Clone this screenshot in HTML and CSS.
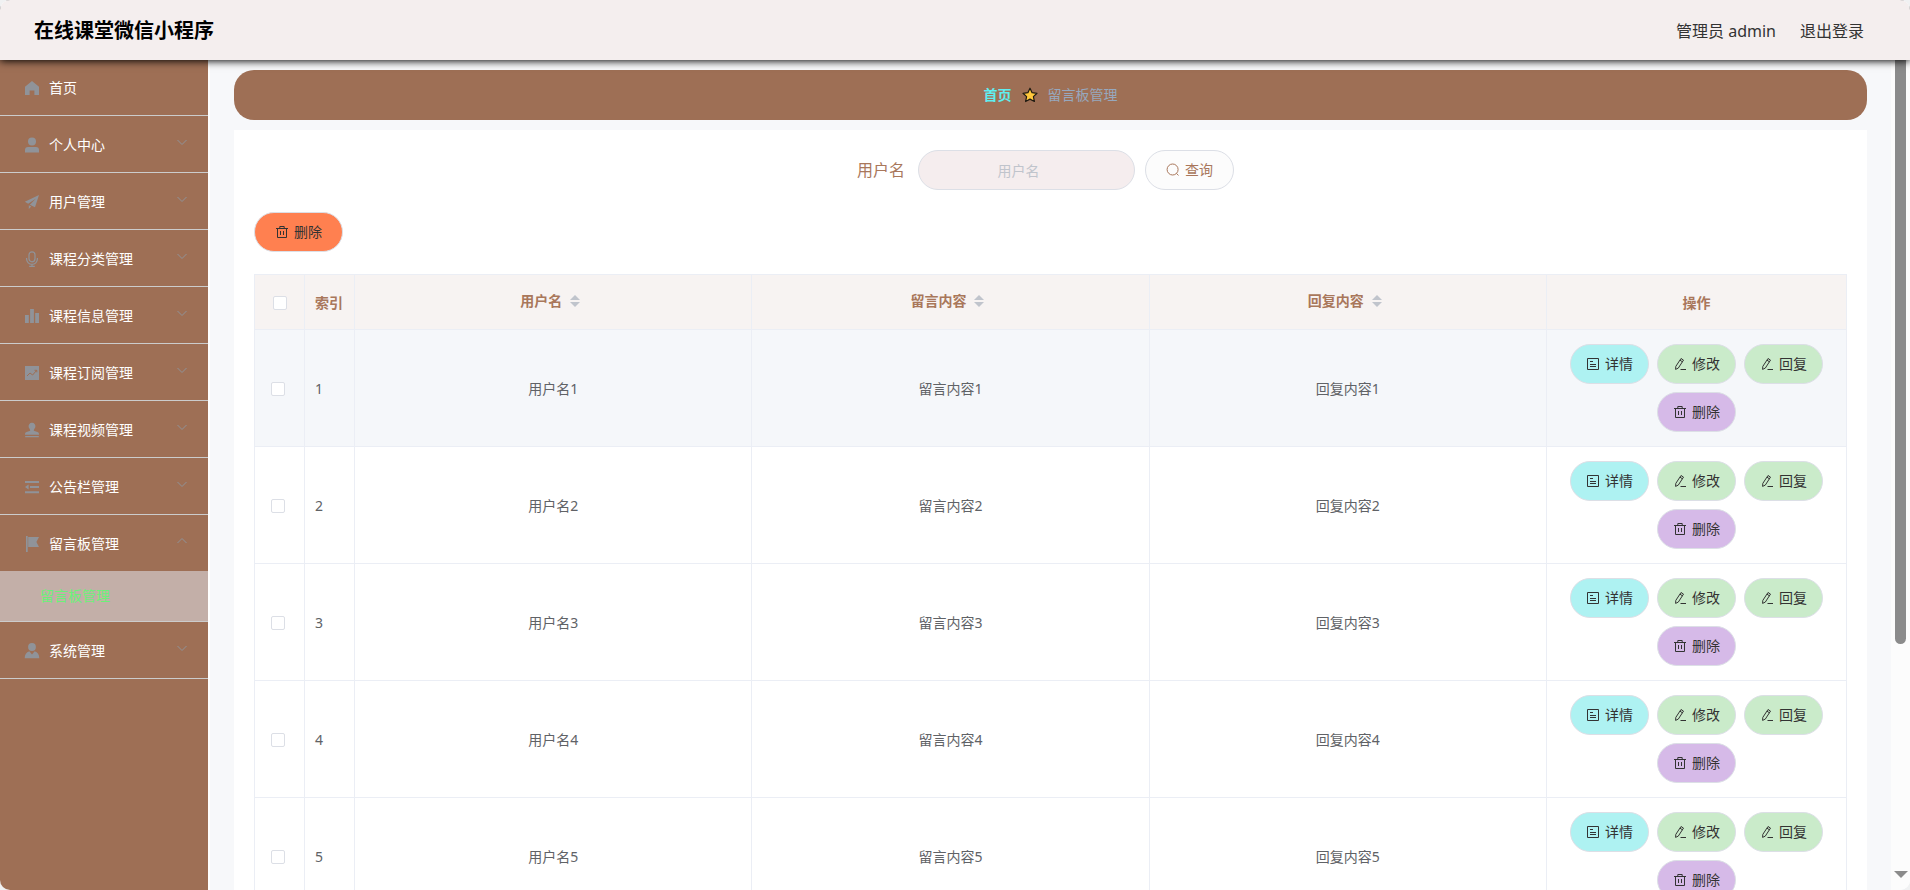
FILE: index.html
```html
<!DOCTYPE html>
<html lang="zh-CN">
<head>
<meta charset="utf-8">
<title>在线课堂微信小程序</title>
<link rel="stylesheet" href="styles.css">
</head>
<body>
<svg class="sprite" aria-hidden="true">
  <symbol id="home" viewBox="0 0 16 16"><path d="M8 1 1 6.800V15h4.600v-4.500h4.800V15H15V6.800z" fill="currentColor"/></symbol>
  <symbol id="user" viewBox="0 0 16 16"><circle cx="8" cy="4.500" r="4" fill="currentColor"/><path d="M1 15.500V13a3 3 0 0 1 3-3h8a3 3 0 0 1 3 3v2.500z" fill="currentColor"/></symbol>
  <symbol id="plane" viewBox="0 0 16 16"><path d="M15 1 .8 7.800l3.400 2L12 4.600l-6.200 6.200 5.200 2.400zM4.800 11.300V15l2.400-2.600z" fill="currentColor"/></symbol>
  <symbol id="mic" viewBox="0 0 16 16"><g fill="none" stroke="currentColor" stroke-width="1.200"><rect x="5" y=".8" width="6" height="10" rx="3"/><path d="M2.600 7v1a5.400 5.400 0 0 0 10.800 0V7M8 13.200v2M5.200 15.300h5.600"/></g></symbol>
  <symbol id="bars" viewBox="0 0 16 16"><path d="M1 7h3.800v8H1zM6.100 1h3.800v14H6.100zM11.200 5H15v10h-3.800z" fill="currentColor"/></symbol>
  <symbol id="trend" viewBox="0 0 16 16"><path d="M1 1h14v14H1z" fill="currentColor"/><path d="m3 11 3-3 2.600 2 4-4.600M10.500 5.300h2.300v2" fill="none" stroke="#9e6f55" stroke-width="1"/></symbol>
  <symbol id="stamp" viewBox="0 0 16 16"><path d="M8 .8a3.400 3.400 0 0 0-3.300 4.400C5 6.300 6.200 7 6.200 8.800L2.500 10A2 2 0 0 0 1 12v.8h14V12a2 2 0 0 0-1.500-2L9.800 8.800c0-1.800 1.200-2.500 1.500-3.600A3.400 3.400 0 0 0 8 .8zM1.200 14h13.600v1.300H1.200z" fill="currentColor"/></symbol>
  <symbol id="fold" viewBox="0 0 16 16"><path d="M1 2h14v2H1zM6 7h9v2H6zM1 12.200h14v2H1zM1 8l3.600-2.500v5z" fill="currentColor"/></symbol>
  <symbol id="flag" viewBox="0 0 16 16"><path d="M2 0h1.700v16H2zM4.200 1H15l-2.600 5 2.600 5H4.200z" fill="currentColor"/></symbol>
  <symbol id="person" viewBox="0 0 16 16"><circle cx="8" cy="4" r="3.900" fill="currentColor"/><path d="M5.300 8.200 8 11.500l2.700-3.300c3 .8 4.600 3.300 4.600 7.100H.7c0-3.800 1.600-6.300 4.600-7.100z" fill="currentColor"/></symbol>
  <symbol id="chevron" viewBox="0 0 14 14"><path d="m2.500 5 4.500 4.500L11.500 5" fill="none" stroke="currentColor" stroke-width="1"/></symbol>
  <symbol id="search" viewBox="0 0 14 14"><path d="M6.600 1a5.500 5.500 0 1 0 0 11 5.500 5.500 0 0 0 0-11zM10.400 10.400l2.100 2" fill="none" stroke="currentColor" stroke-width="1"/></symbol>
  <symbol id="trash" viewBox="0 0 14 14"><path d="M1 3.500h12M2.500 3.500v9h9v-9M4.800 3.200V1.500h4.400v1.700M5.500 6v4M8.500 6v4" fill="none" stroke="currentColor" stroke-width="1"/></symbol>
  <symbol id="doc" viewBox="0 0 14 14"><path d="M1.500 1.500h11v11h-11zM4 4.500h3M4 7.500h6M4 9.500h6" fill="none" stroke="currentColor" stroke-width="1"/></symbol>
  <symbol id="edit" viewBox="0 0 14 14"><path d="m8 1.500 2.500 1.600-5.200 8-2.700 1.300.2-3zM7 3.200l2.400 1.600M7.500 12.500h5.500" fill="none" stroke="currentColor" stroke-width="1"/></symbol>
  <symbol id="star" viewBox="0 0 16 16"><path d="m8 1.200 2.100 4.500 4.900.6-3.600 3.300 1 4.900L8 12.100l-4.400 2.400 1-4.900L1 6.300l4.900-.6z" fill="#ffc83d" stroke="#1f1a12" stroke-width="1.200" stroke-linejoin="round"/></symbol>
  <symbol id="down" viewBox="0 0 14 8"><path d="M0 0h14L7 7z" fill="currentColor"/></symbol>
</svg>

<div class="app">
  <header class="topbar">
    <h1 class="brand">在线课堂微信小程序</h1>
    <span class="account">管理员 admin</span>
    <a class="logout" href="#">退出登录</a>
  </header>

  <div class="body">
    <nav class="sidebar">
      <a class="item first" href="#"><svg class="glyph"><use href="#home"/></svg><span>首页</span></a>
      <a class="item" href="#"><svg class="glyph"><use href="#user"/></svg><span>个人中心</span><svg class="chevron"><use href="#chevron"/></svg></a>
      <a class="item" href="#"><svg class="glyph"><use href="#plane"/></svg><span>用户管理</span><svg class="chevron"><use href="#chevron"/></svg></a>
      <a class="item" href="#"><svg class="glyph"><use href="#mic"/></svg><span>课程分类管理</span><svg class="chevron"><use href="#chevron"/></svg></a>
      <a class="item" href="#"><svg class="glyph"><use href="#bars"/></svg><span>课程信息管理</span><svg class="chevron"><use href="#chevron"/></svg></a>
      <a class="item" href="#"><svg class="glyph"><use href="#trend"/></svg><span>课程订阅管理</span><svg class="chevron"><use href="#chevron"/></svg></a>
      <a class="item" href="#"><svg class="glyph"><use href="#stamp"/></svg><span>课程视频管理</span><svg class="chevron"><use href="#chevron"/></svg></a>
      <a class="item" href="#"><svg class="glyph"><use href="#fold"/></svg><span>公告栏管理</span><svg class="chevron"><use href="#chevron"/></svg></a>
      <a class="item open" href="#"><svg class="glyph"><use href="#flag"/></svg><span>留言板管理</span><svg class="chevron"><use href="#chevron"/></svg></a>
      <a class="subitem" href="#">留言板管理</a>
      <a class="item" href="#"><svg class="glyph"><use href="#person"/></svg><span>系统管理</span><svg class="chevron"><use href="#chevron"/></svg></a>
    </nav>

    <main class="main">
      <div class="crumbs">
        <a class="crumb-home" href="#">首页</a>
        <svg class="star"><use href="#star"/></svg>
        <span class="crumb-here">留言板管理</span>
      </div>

      <section class="card">
        <form class="search">
          <label class="search-label" for="username">用户名</label>
          <input class="search-input" id="username" type="text" placeholder="用户名">
          <button class="btn wide query" type="button"><svg class="icon"><use href="#search"/></svg>查询</button>
        </form>
        <div class="tools">
          <button class="btn wide bulk" type="button"><svg class="icon"><use href="#trash"/></svg>删除</button>
        </div>

        <table class="grid">
          <colgroup><col class="narrow"><col class="narrow"><col><col><col><col class="ops"></colgroup>
          <thead>
            <tr>
              <th><input class="check" type="checkbox" aria-label="全选"></th>
              <th class="index">索引</th>
              <th><span class="sortable">用户名<span class="carets"></span></span></th>
              <th><span class="sortable">留言内容<span class="carets"></span></span></th>
              <th><span class="sortable">回复内容<span class="carets"></span></span></th>
              <th>操作</th>
            </tr>
          </thead>
          <tbody>
            <tr class="hover">
              <td class="pick"><input class="check" type="checkbox" aria-label="选择1"></td><td class="index">1</td><td>用户名1</td><td>留言内容1</td><td>回复内容1</td>
              <td><div class="actions"><button class="btn view" type="button"><svg class="icon"><use href="#doc"/></svg>详情</button><button class="btn edit" type="button"><svg class="icon"><use href="#edit"/></svg>修改</button><button class="btn edit" type="button"><svg class="icon"><use href="#edit"/></svg>回复</button><button class="btn remove" type="button"><svg class="icon"><use href="#trash"/></svg>删除</button></div></td>
            </tr>
            <tr>
              <td class="pick"><input class="check" type="checkbox" aria-label="选择2"></td><td class="index">2</td><td>用户名2</td><td>留言内容2</td><td>回复内容2</td>
              <td><div class="actions"><button class="btn view" type="button"><svg class="icon"><use href="#doc"/></svg>详情</button><button class="btn edit" type="button"><svg class="icon"><use href="#edit"/></svg>修改</button><button class="btn edit" type="button"><svg class="icon"><use href="#edit"/></svg>回复</button><button class="btn remove" type="button"><svg class="icon"><use href="#trash"/></svg>删除</button></div></td>
            </tr>
            <tr>
              <td class="pick"><input class="check" type="checkbox" aria-label="选择3"></td><td class="index">3</td><td>用户名3</td><td>留言内容3</td><td>回复内容3</td>
              <td><div class="actions"><button class="btn view" type="button"><svg class="icon"><use href="#doc"/></svg>详情</button><button class="btn edit" type="button"><svg class="icon"><use href="#edit"/></svg>修改</button><button class="btn edit" type="button"><svg class="icon"><use href="#edit"/></svg>回复</button><button class="btn remove" type="button"><svg class="icon"><use href="#trash"/></svg>删除</button></div></td>
            </tr>
            <tr>
              <td class="pick"><input class="check" type="checkbox" aria-label="选择4"></td><td class="index">4</td><td>用户名4</td><td>留言内容4</td><td>回复内容4</td>
              <td><div class="actions"><button class="btn view" type="button"><svg class="icon"><use href="#doc"/></svg>详情</button><button class="btn edit" type="button"><svg class="icon"><use href="#edit"/></svg>修改</button><button class="btn edit" type="button"><svg class="icon"><use href="#edit"/></svg>回复</button><button class="btn remove" type="button"><svg class="icon"><use href="#trash"/></svg>删除</button></div></td>
            </tr>
            <tr>
              <td class="pick"><input class="check" type="checkbox" aria-label="选择5"></td><td class="index">5</td><td>用户名5</td><td>留言内容5</td><td>回复内容5</td>
              <td><div class="actions"><button class="btn view" type="button"><svg class="icon"><use href="#doc"/></svg>详情</button><button class="btn edit" type="button"><svg class="icon"><use href="#edit"/></svg>修改</button><button class="btn edit" type="button"><svg class="icon"><use href="#edit"/></svg>回复</button><button class="btn remove" type="button"><svg class="icon"><use href="#trash"/></svg>删除</button></div></td>
            </tr>
          </tbody>
        </table>
      </section>
    </main>

    <div class="scrollbar" aria-hidden="true">
      <div class="track"><div class="thumb"></div></div>
      <svg class="arrow"><use href="#down"/></svg>
    </div>
  </div>
</div>
</body>
</html>
```
FILE: styles.css
```css
* { box-sizing: border-box; }

body {
  margin: 0;
  background: #f0f1f2;
  color: #606266;
  font: 14px/20px "Noto Sans", "Noto Sans CJK SC", sans-serif;
}

a { color: inherit; text-decoration: none; }

.sprite { position: absolute; width: 0; height: 0; }

.app {
  display: flex;
  flex-direction: column;
  height: 100vh;
  overflow: hidden;
  border-radius: 10px;
  background: #fff;
}

/* Top bar */
.topbar {
  display: flex;
  flex: none;
  align-items: center;
  gap: 24px;
  height: 60px;
  padding: 2px 46px 0 34px;
  background: #f4eeee;
  box-shadow: 0 1px 8px #000;
  color: #333;
  font-size: 16px;
  z-index: 1;
}

.brand {
  margin: 0 auto 0 0;
  color: #000;
  font-size: 20px;
  font-weight: 700;
}

.body { display: flex; flex: 1; min-height: 0; }

/* Sidebar */
.sidebar {
  flex: none;
  width: 208px;
  background: #9e6f55;
  color: #fff;
}

.item {
  display: flex;
  align-items: center;
  height: 57px;
  padding: 2px 19px 0 23px;
  border-bottom: 1px solid #ccc;
}

.first { height: 56px; padding-top: 0; }
.open { height: 56px; border-bottom: 0; }

.glyph { width: 18px; height: 16px; margin-right: 8px; color: #909399; }

.chevron { width: 14px; height: 14px; margin: 0 0 6px auto; color: #909399; }
.open .chevron { transform: rotate(180deg); }

.subitem {
  display: flex;
  align-items: center;
  height: 51px;
  padding-left: 40px;
  border-bottom: 1px solid #ccc;
  background: #c3afa8;
  color: #6bf178;
}

/* Content */
.main {
  flex: 1;
  min-width: 0;
  margin-left: 2px;
  padding: 10px 24px 0;
  overflow: hidden;
  background: #f7f8fa;
}

.crumbs {
  display: flex;
  align-items: center;
  justify-content: center;
  gap: 10px;
  height: 50px;
  border-radius: 20px;
  background: #9e6f55;
}

.crumb-home { color: #5feef0; font-weight: 700; }
.crumb-here { color: #97a8be; }
.star { width: 16px; height: 16px; }

.card {
  margin-top: 10px;
  padding: 20px;
  background: #fff;
}

.search {
  display: flex;
  align-items: center;
  justify-content: center;
  padding-right: 10px;
}

.search-label { margin-right: 13px; color: #a9775b; font-size: 16px; }

.search-input {
  width: 217px;
  height: 40px;
  margin-right: 10px;
  padding: 0 30px 0 14px;
  border: 1px solid #dcdfe6;
  border-radius: 20px;
  outline: 0;
  background: #f5edee;
  color: #606266;
  font: inherit;
  text-align: center;
}

.search-input::placeholder { color: #c0c4cc; }

.btn {
  display: inline-flex;
  align-items: center;
  gap: 5px;
  height: 40px;
  padding: 0 15px;
  border: 1px solid #dcdfe6;
  border-radius: 20px;
  color: #333;
  font: inherit;
}

.wide { padding: 0 20px; }
.icon { width: 14px; height: 14px; }

.query { background: #fcfcfc; color: #a9775b; }
.bulk { background: #ff8050; }
.view { background: #aef2f2; }
.edit { background: #caebca; }
.remove { background: #d6bae8; }

.tools { display: flex; padding: 22px 0; }

/* Table */
.grid {
  width: 100%;
  border-collapse: collapse;
  table-layout: fixed;
}

.narrow { width: 50px; }
.ops { width: 300px; }

.grid th,
.grid td {
  padding: 2px 0 0;
  border: 1px solid #ebeef5;
  text-align: center;
}

.grid th {
  height: 55px;
  background: #f7f3f2;
  color: #a9775b;
  font-weight: 700;
}

.grid td { height: 117px; }
.grid td:last-child { padding: 0; }
.grid .index { padding-left: 10px; text-align: left; }
.grid .pick { padding-right: 4px; }
.hover { background: #f5f7fa; }

.sortable {
  display: inline-flex;
  align-items: center;
  gap: 8px;
  padding: 0 6px 4px 0;
}

.carets { display: grid; gap: 2px; }
.carets::before,
.carets::after {
  width: 0;
  border: 5px solid transparent;
  content: "";
}
.carets::before { border-top: 0; border-bottom-color: #c0c4cc; }
.carets::after { border-bottom: 0; border-top-color: #c0c4cc; }

.check {
  display: block;
  width: 14px;
  height: 14px;
  margin: 0 auto;
  border: 1px solid #dcdfe6;
  border-radius: 2px;
  appearance: none;
  background: #fff;
}

.actions {
  display: flex;
  flex-wrap: wrap;
  justify-content: center;
  gap: 8px;
  padding: 0 10px;
}

/* Scroll rail */
.scrollbar {
  display: flex;
  flex: none;
  flex-direction: column;
  align-items: center;
  width: 19px;
  padding-bottom: 11px;
  background: #fcfcfc;
}

.track { flex: 1; width: 11px; }
.thumb { height: 72%; border-radius: 0 0 6px 6px; background: #8b8b8b; }
.arrow { width: 14px; height: 8px; color: #8b8b8b; }
```
